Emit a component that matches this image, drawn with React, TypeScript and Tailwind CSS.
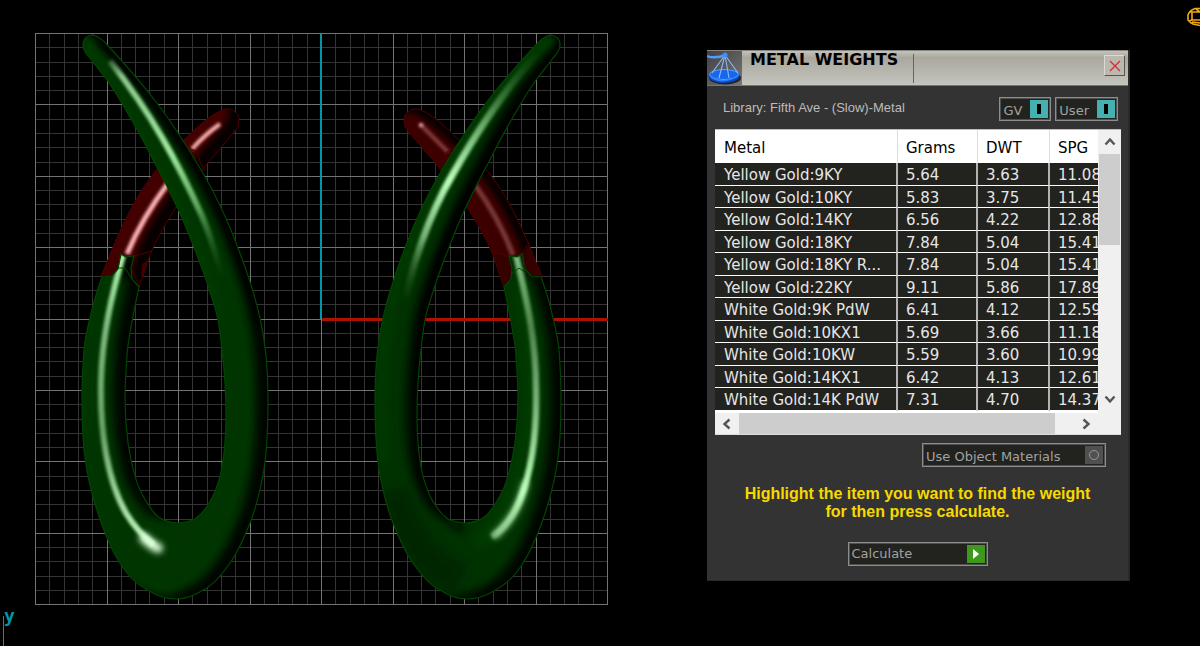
import type { ReactNode } from "react";

type Metal = { name: string; grams: string; dwt: string; spg: string };

const metals: Metal[] = [
  { name: "Yellow Gold:9KY", grams: "5.64", dwt: "3.63", spg: "11.08" },
  { name: "Yellow Gold:10KY", grams: "5.83", dwt: "3.75", spg: "11.45" },
  { name: "Yellow Gold:14KY", grams: "6.56", dwt: "4.22", spg: "12.88" },
  { name: "Yellow Gold:18KY", grams: "7.84", dwt: "5.04", spg: "15.41" },
  { name: "Yellow Gold:18KY R...", grams: "7.84", dwt: "5.04", spg: "15.41" },
  { name: "Yellow Gold:22KY", grams: "9.11", dwt: "5.86", spg: "17.89" },
  { name: "White Gold:9K PdW", grams: "6.41", dwt: "4.12", spg: "12.59" },
  { name: "White Gold:10KX1", grams: "5.69", dwt: "3.66", spg: "11.18" },
  { name: "White Gold:10KW", grams: "5.59", dwt: "3.60", spg: "10.99" },
  { name: "White Gold:14KX1", grams: "6.42", dwt: "4.13", spg: "12.61" },
  { name: "White Gold:14K PdW", grams: "7.31", dwt: "4.70", spg: "14.37" },
];

const BODY =
  "M83 45 C83 38 88 35 93 35 C98 36 104 41 109 47 C125 64 142 84 157 103 C172 123 188 148 200 168 C216 195 230 226 238 248 C248 274 256 300 260 318 C265 340 268 370 268 397 C268 430 267 458 262 480 C258 500 254 513 250 523 C244 538 238 552 230 563 C221 576 212 586 203 590 C194 596 186 599 177 599 C168 599 160 597 153 593 C143 588 134 582 127 573 C119 563 113 552 108 540 C101 524 97 511 93 497 C87 475 84 455 83 437 C82 420 82 410 82 397 C82 380 83 363 84 350 C85 338 88 326 90 318 C93 304 98 288 102 277 L112 276 L118 269 L121 254 L126 257 L134 256 L131 268 L132 279 L139 287 C136 301 133 315 131 327 C129 339 127 348 127 357 C126 371 125 384 125 397 C125 413 126 428 128 443 C131 461 134 477 140 490 C145 501 150 508 156 515 C162 520 168 523 177 523 C184 523 190 521 195 519 C202 514 207 508 212 498 C217 488 220 478 222 467 C225 450 226 434 226 417 C226 398 225 374 222 350 C221 340 220 330 218 320 C216 309 213 301 210 292 C206 279 202 268 197 255 C191 240 184 221 177 207 C170 192 161 174 153 160 C146 145 138 131 130 117 C123 105 115 91 107 80 C101 72 95 65 90 58 C86 54 83 50 83 45 Z";

const BAND =
  "M101 276 C105 267 108 260 111 252 C118 235 127 215 137 198 C148 179 166 156 185 139 C198 126 211 115 220 111 C224 109 228 108 232 110 C236 112 239 115 239 119 L238 127 C233 134 228 139 223 145 C209 161 195 178 184 195 C171 214 160 233 153 248 C147 261 144 275 139 287 L132 279 C125 275 121 270 116 274 C111 278 105 278 101 276 Z";

function Grid() {
  const minor: ReactNode[] = [];
  const major: ReactNode[] = [];
  for (let i = 0; i <= 40; i++) {
    const x = Math.round(35 + i * 14.3) + 0.5;
    const y = Math.round(33 + i * 14.28) + 0.5;
    const group = i % 5 === 0 ? major : minor;
    group.push(<path key={i} d={`M${x} 33 V605 M35 ${y} H608`} />);
  }
  return (
    <g fill="none">
      <g stroke="#343434">{minor}</g>
      <g stroke="#747474">{major}</g>
    </g>
  );
}

function Earrings() {
  return (
    <svg
      viewBox="35 32 574 574"
      className="h-auto w-full"
      role="img"
      aria-label="Viewport with two earrings"
    >
      <defs>
        <path id="body" d={BODY} />
        <path id="band" d={BAND} />
        <clipPath id="bodyL"><use href="#body" /></clipPath>
        <clipPath id="bandL"><use href="#band" /></clipPath>
        <clipPath id="bodyR"><use href="#body" transform="matrix(-1 0 0 1 643 0)" /></clipPath>
        <clipPath id="bandR"><use href="#band" transform="matrix(-1 0 0 1 643 0)" /></clipPath>
        <filter id="b1" filterUnits="userSpaceOnUse" x="0" y="0" width="650" height="650"><feGaussianBlur stdDeviation="1.5" /></filter>
        <filter id="b3" filterUnits="userSpaceOnUse" x="0" y="0" width="650" height="650"><feGaussianBlur stdDeviation="3" /></filter>
        <filter id="b5" filterUnits="userSpaceOnUse" x="0" y="0" width="650" height="650"><feGaussianBlur stdDeviation="5" /></filter>
        <linearGradient id="arm" gradientUnits="userSpaceOnUse" x1="105" y1="52" x2="238" y2="310">
          <stop offset="0" stopColor="#8fd08f" stopOpacity="0" />
          <stop offset="0.1" stopColor="#8cc98c" />
          <stop offset="0.42" stopColor="#a0eaa0" />
          <stop offset="0.62" stopColor="#5fa85f" />
          <stop offset="0.88" stopColor="#1d551d" stopOpacity="0" />
        </linearGradient>
        <linearGradient id="armR" gradientUnits="userSpaceOnUse" x1="540" y1="50" x2="400" y2="320">
          <stop offset="0" stopColor="#2f702f" stopOpacity="0" />
          <stop offset="0.3" stopColor="#67a967" />
          <stop offset="0.52" stopColor="#bcffbc" />
          <stop offset="0.72" stopColor="#75b375" />
          <stop offset="0.95" stopColor="#145014" stopOpacity="0" />
        </linearGradient>
        <linearGradient id="legL" gradientUnits="userSpaceOnUse" x1="0" y1="255" x2="0" y2="550">
          <stop offset="0" stopColor="#aef8ae" />
          <stop offset="0.25" stopColor="#7db97d" />
          <stop offset="0.6" stopColor="#68a368" />
          <stop offset="1" stopColor="#c6ffc6" />
        </linearGradient>
        <linearGradient id="legR" gradientUnits="userSpaceOnUse" x1="0" y1="255" x2="0" y2="545">
          <stop offset="0" stopColor="#7bc07b" />
          <stop offset="0.25" stopColor="#4f864f" />
          <stop offset="0.5" stopColor="#78b278" />
          <stop offset="0.82" stopColor="#b4ffb4" />
          <stop offset="1" stopColor="#70b070" stopOpacity="0.6" />
        </linearGradient>
      </defs>

      <Grid />
      <path d="M321 33 V319" stroke="#0097a7" strokeWidth="2" />
      <path d="M322 319.5 H608" stroke="#b01000" strokeWidth="3" />

      <g clipPath="url(#bandL)">
        <use href="#band" fill="#060000" />
        <use href="#band" fill="#420000" transform="translate(-11 -6)" filter="url(#b3)" />
        <path d="M127 254 C137 230 151 206 169 182" fill="none" stroke="#ffb4b4" strokeWidth="5" filter="url(#b1)" />
        <path d="M192 149 C201 139 210 131 220 124" fill="none" stroke="#ffb4b4" strokeWidth="4" filter="url(#b1)" />
        <path d="M112 247 C114 258 120 262 119 269 L111 277 L100 276 Z M142 264 L147 261 L147 275 L141 277 Z" fill="#410000" />
      </g>
      <use href="#band" fill="none" stroke="#510000" strokeWidth="1" />
      <path d="M185 140 L190 149 Q199 150 200 162 L205 171" fill="none" stroke="#4c0000" />
      <path d="M126 256 L134 256 L152 251 M134 257 L131 268 L139 286" fill="none" stroke="#520000" />
      <g clipPath="url(#bodyL)">
        <use href="#body" fill="#000500" />
        <use href="#body" fill="#003600" transform="translate(-12 -4)" filter="url(#b5)" />
        <path d="M85 42 Q97 61 109 81 Q148 140 176 200 Q210 272 221 320" fill="none" stroke="#003800" strokeWidth="10" filter="url(#b3)" />
        <path d="M104 280 Q88 345 88 400 Q90 475 112 532 Q135 580 172 584" fill="none" stroke="#003600" strokeWidth="16" filter="url(#b5)" />
        <path d="M222 300 Q242 370 239 430 Q229 500 200 536 L173 565" fill="none" stroke="#003400" strokeWidth="16" filter="url(#b5)" />
        <path d="M100 40 C145 85 181 139 206 184 Q246 255 259 325" fill="none" stroke="#000600" strokeWidth="6" filter="url(#b3)" />
        <path d="M110 61 C151 113 178 163 202 216 Q217 252 227 300" fill="none" stroke="url(#arm)" strokeWidth="6" filter="url(#b1)" />
        <path d="M123 255 C113 291 102 333 101 382 C100 431 107 480 126 513 C135 528 144 537 154 545" fill="none" stroke="url(#legL)" strokeWidth="6" filter="url(#b1)" />
        <path d="M144 538 Q151 545 158 548" fill="none" stroke="#dbffdb" strokeWidth="10" strokeLinecap="round" filter="url(#b3)" />
        <path d="M118 268 H125 L132 279" fill="none" stroke="#004a00" />
      </g>
      <use href="#body" fill="none" stroke="#004600" strokeWidth="1.2" />

      <g clipPath="url(#bandR)">
        <use href="#band" fill="#060000" transform="matrix(-1 0 0 1 643 0)" />
        <use href="#band" fill="#3c0000" transform="matrix(-1 0 0 1 635 3)" filter="url(#b3)" />
        <path d="M421 125 L448 152" fill="none" stroke="#803a3a" strokeWidth="4" filter="url(#b1)" />
        <circle cx="421" cy="125" r="2" fill="#ffc0c0" filter="url(#b1)" />
        <path d="M475 185 Q499 218 513 255" fill="none" stroke="#783838" strokeWidth="5" filter="url(#b1)" />
        <path d="M493 252 L510 258 L514 273 L503 287 Z M530 243 L524 254 L527 273 L543 278 Z" fill="#350000" />
      </g>
      <use href="#band" fill="none" stroke="#510000" transform="matrix(-1 0 0 1 643 0)" />
      <path d="M461 140 L453 149 L447 152 L446 163 L441 171" fill="none" stroke="#4c0000" />
      <path d="M493 252 L509 256 M529 242 L523 253 L526 273" fill="none" stroke="#520000" />
      <g clipPath="url(#bodyR)">
        <use href="#body" fill="#000500" transform="matrix(-1 0 0 1 643 0)" />
        <use href="#body" fill="#003200" transform="matrix(-1 0 0 1 632 -4)" filter="url(#b5)" />
        <path d="M552 37 Q504 81 466 144 Q420 213 394 290 Q373 380 385 460" fill="none" stroke="#003800" strokeWidth="12" filter="url(#b3)" />
        <path d="M518 287 Q531 350 529 400 Q525 500 477 545" fill="none" stroke="#003a00" strokeWidth="14" filter="url(#b5)" />
        <path d="M392 490 Q412 560 460 581" fill="none" stroke="#002600" strokeWidth="34" filter="url(#b5)" />
        <path d="M421 440 Q423 500 462 530" fill="none" stroke="#000800" strokeWidth="7" filter="url(#b5)" />
        <path d="M558 58 Q512 108 484 165 Q435 255 424 325 L419 400" fill="none" stroke="#000600" strokeWidth="7" filter="url(#b3)" />
        <path d="M540 50 C499 95 469 144 444 190 Q415 247 402 315" fill="none" stroke="url(#armR)" strokeWidth="7" filter="url(#b1)" />
        <path d="M516 255 C525 294 536 336 536 389 C537 433 531 472 520 500 C514 515 505 528 492 537" fill="none" stroke="url(#legR)" strokeWidth="6.5" filter="url(#b1)" />
        <path d="M525 484 Q518 515 496 535" fill="none" stroke="#c3ffc3" strokeOpacity="0.65" strokeWidth="7" strokeLinecap="round" filter="url(#b3)" />
        <path d="M512 274 L519 268 L526 273" fill="none" stroke="#004a00" />
      </g>
      <use href="#body" fill="none" stroke="#004600" strokeWidth="1.2" transform="matrix(-1 0 0 1 643 0)" />
    </svg>
  );
}

function ScaleIcon() {
  return (
    <svg viewBox="0 0 35 34" className="h-[34px] w-[35px] shrink-0" aria-hidden="true">
      <defs>
        <linearGradient id="iconBg" x1="0" y1="0" x2="1" y2="1">
          <stop offset="0" stopColor="#404043" />
          <stop offset="1" stopColor="#77777a" />
        </linearGradient>
      </defs>
      <rect width="35" height="34" fill="url(#iconBg)" />
      <ellipse cx="18" cy="27" rx="16" ry="6.5" fill="#222326" />
      <ellipse cx="17" cy="25" rx="15.5" ry="7" fill="#0d45c4" />
      <ellipse cx="17" cy="23.5" rx="14.5" ry="5" fill="#1767ee" stroke="#5aa6ff" />
      <path d="M4 26 Q17 34 30 25" fill="none" stroke="#2f82ff" strokeWidth="1.5" />
      <path d="M0 5 Q8 8 19 4" fill="none" stroke="#4f9dff" strokeWidth="2.4" />
      <path d="M18 4 L5 22 M18 4 L12 27 M18 4 L22 27 M18 4 L31 22" fill="none" stroke="#8fb9f5" strokeWidth="1.1" />
      <circle cx="18" cy="4" r="2.6" fill="#3e8cff" />
    </svg>
  );
}

function Toggle({ label }: { label: string }) {
  return (
    <button
      type="button"
      aria-pressed="true"
      className="flex h-6 items-center gap-2 border border-[#8d8d8d] bg-[#22221f] pr-0.5 pl-[3px] text-[13px] text-[#a2a2a2] shadow-[inset_0_0_0_1px_#50504e]"
    >
      <span className="pt-1 leading-4">{label}</span>
      <span className="flex h-[18px] w-[18px] items-center justify-center bg-[#45b0b2]">
        <span className="h-2.5 w-1 bg-black" />
      </span>
    </button>
  );
}

function Chevron({ d }: { d: string }) {
  return (
    <svg viewBox="0 0 12 12" className="h-3 w-3" aria-hidden="true">
      <path d={d} fill="none" stroke="#555" strokeWidth="2.4" />
    </svg>
  );
}

const headCell = "h-[33px] border-r border-[#dedede] pt-0.5 pl-2 text-left font-normal first:pl-[9px]";
const bodyCell =
  "overflow-hidden border-r-2 border-b border-r-[#b2b2b2] border-b-white pt-0.5 pl-2 whitespace-nowrap first:pl-[9px] last:border-r-0";

export default function App() {
  return (
    <main className="relative flex min-h-screen items-start justify-between overflow-hidden bg-black pt-8 pr-[70px] pl-[35px] font-['DejaVu_Sans',sans-serif]">
      <section className="w-[574px] shrink-0">
        <Earrings />
      </section>

      <section className="mt-[18px] w-[423px] shrink-0 border-r-2 border-b border-[#292929] bg-[#333333] pb-3.5">
        <header className="flex h-9 border-y border-t-[#85857f] border-b-[#777771] bg-linear-to-b from-[#c4c2b9] via-[#aaa89e] via-20% to-[#c5c4bd]">
          <ScaleIcon />
          <h1 className="w-[171px] pl-2 text-base leading-[18px] font-bold whitespace-nowrap text-black">METAL WEIGHTS</h1>
          <div className="mt-[3px] h-[29px] border-l border-[#66665f] shadow-[inset_1px_0_#d4d3cc]" />
          <button
            type="button"
            aria-label="Close"
            className="mt-1 mr-[3px] ml-auto flex h-[21px] w-[21px] items-center justify-center border border-t-[#dad9d3] border-r-[#55554f] border-b-[#55554f] border-l-[#dad9d3] bg-[#bab8af]"
          >
            <svg viewBox="0 0 12 12" className="h-3 w-3" aria-hidden="true">
              <path d="M1 1 L11 11 M11 1 L1 11" stroke="#d52c34" strokeWidth="1.3" />
            </svg>
          </button>
        </header>

        <div className="flex h-[43px] items-center gap-1 pt-0.5 pr-2.5 pl-4">
          <p className="mr-auto pb-0.5 font-['Liberation_Sans',sans-serif] text-[13px] text-[#bcbcbc]">Library: Fifth Ave - (Slow)-Metal</p>
          <Toggle label="GV" />
          <Toggle label="User" />
        </div>

        <div className="mr-[7px] ml-2 border-t border-[#bdbdbd] bg-[#f0f0f0]">
          <div className="flex">
            <div className="min-w-0 flex-1 overflow-hidden border-b-2 border-white">
              <table className="w-full table-fixed border-separate border-spacing-0 text-[15px] leading-4">
                <colgroup>
                  <col className="w-[183px]" />
                  <col className="w-20" />
                  <col className="w-[72px]" />
                  <col />
                </colgroup>
                <thead className="bg-white text-black">
                  <tr>
                    <th className={headCell}>Metal</th>
                    <th className={headCell}>Grams</th>
                    <th className={headCell}>DWT</th>
                    <th className="h-[33px] pt-0.5 pl-2 text-left font-normal">SPG</th>
                  </tr>
                </thead>
                <tbody className="bg-[#22221f] text-[#e6e6e6]">
                  {metals.map((m) => (
                    <tr key={m.name} className="odd:h-[23px] even:h-[22px]">
                      <td className={bodyCell}>{m.name}</td>
                      <td className={bodyCell}>{m.grams}</td>
                      <td className={bodyCell}>{m.dwt}</td>
                      <td className={bodyCell}>{m.spg}</td>
                    </tr>
                  ))}
                </tbody>
              </table>
            </div>
            <div className="flex w-[23px] shrink-0 flex-col items-center">
              <button type="button" aria-label="Scroll up" className="flex h-6 w-full items-center justify-center">
                <Chevron d="M1.5 8.5 L6 3.5 L10.5 8.5" />
              </button>
              <div className="h-[91px] w-[21px] bg-[#cdcdcd]" />
              <button type="button" aria-label="Scroll down" className="mt-auto flex h-7 w-full items-center justify-center">
                <Chevron d="M1.5 3.5 L6 8.5 L10.5 3.5" />
              </button>
            </div>
          </div>
          <div className="flex h-[22px] items-center border-b border-[#dcdcdc] pr-[23px]">
            <button type="button" aria-label="Scroll left" className="flex w-6 items-center justify-center">
              <Chevron d="M8.5 1.5 L3.5 6 L8.5 10.5" />
            </button>
            <div className="h-[21px] w-[316px] bg-[#cdcdcd]" />
            <button type="button" aria-label="Scroll right" className="ml-auto flex w-6 items-center justify-center">
              <Chevron d="M3.5 1.5 L8.5 6 L3.5 10.5" />
            </button>
          </div>
        </div>

        <button
          type="button"
          className="mt-2 mr-[22px] ml-auto flex h-6 w-[184px] items-center justify-between border border-[#8d8d8d] bg-[#22221f] pr-0.5 pl-[3px] text-[13px] text-[#a2a2a2] shadow-[inset_0_0_0_1px_#50504e]"
        >
          <span className="pt-1 leading-4">Use Object Materials</span>
          <span className="flex h-[18px] w-[18px] items-center justify-center bg-[#505050]">
            <span className="h-2.5 w-2.5 rounded-full border border-[#979797]" />
          </span>
        </button>

        <p className="mx-auto mt-[18px] w-[370px] text-center font-['Liberation_Sans',sans-serif] text-base leading-[18px] font-bold text-[#f5d900]">
          Highlight the item you want to find the weight for then press calculate.
        </p>

        <button
          type="button"
          className="mx-auto mt-[21px] flex h-6 w-[140px] items-center justify-between border border-[#8d8d8d] bg-[#22221f] pr-0.5 pl-[3px] text-[13px] text-[#a2a2a2] shadow-[inset_0_0_0_1px_#50504e]"
        >
          <span className="leading-4">Calculate</span>
          <span className="flex h-[18px] w-[18px] items-center justify-center bg-[#3d981c]">
            <svg viewBox="0 0 6 10" className="h-2.5 w-1.5" aria-hidden="true">
              <path d="M0 0 L6 5 L0 10 Z" fill="#fff" />
            </svg>
          </span>
        </button>
      </section>

      <div className="absolute bottom-0 left-[3px] flex h-[38px] items-start text-[#0097a7]">
        <span className="mt-2 h-[30px] border-l border-[#0097a7]" />
        <span className="font-['DejaVu_Sans_Mono',monospace] text-lg leading-4 font-bold">y</span>
      </div>
      <svg viewBox="0 0 13 20" className="absolute top-[7px] right-0 h-5 w-[13px]" aria-hidden="true">
        <path d="M13 1.5 H8 L5 3 L2.5 5 L1 8 V13 L3.5 15.5 L6 17 L13 18.5 M2 5 H13 M5 5 V13 H13 M5 13 L2 14 M5 15 L13 16 M9 2 L13 5" fill="none" stroke="#efaa18" strokeWidth="1.6" />
      </svg>
    </main>
  );
}
